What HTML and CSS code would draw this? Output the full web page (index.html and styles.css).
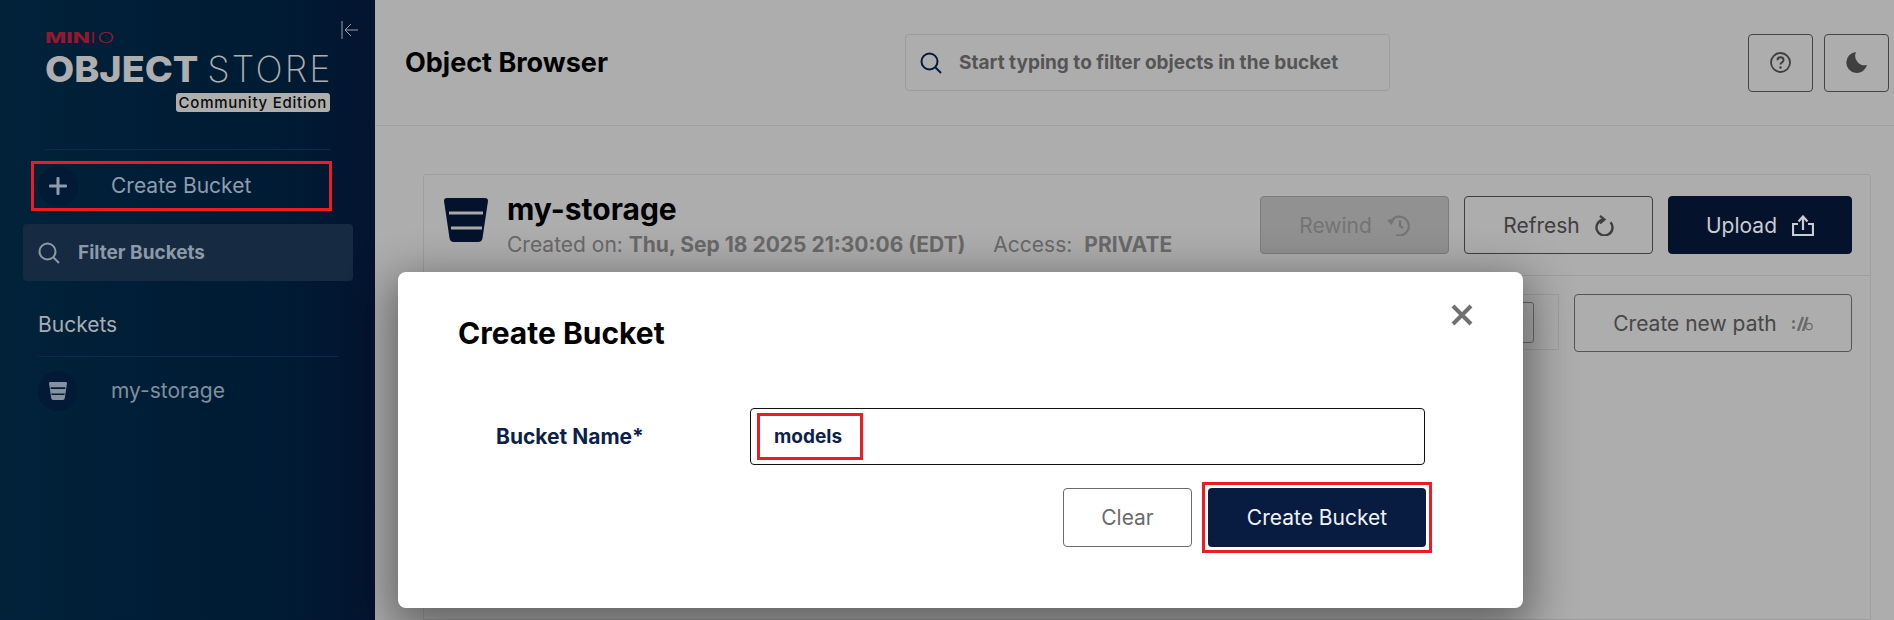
FILE: index.html
```html
<!DOCTYPE html>
<html lang="en">
<head>
<meta charset="UTF-8">
<meta name="viewport" content="width=device-width, initial-scale=1.0">
<title>Object Browser</title>
<link rel="stylesheet" href="styles.css">
</head>
<body>
<aside class="sidebar">
  <button class="collapse-btn" type="button">
    <svg width="18" height="18" viewBox="0 0 18 18" fill="none" stroke="#9a9fa8" stroke-width="1"><path d="M1 0v18M17 9H4M10 3L4 9l6 6"/></svg>
  </button>
  <div class="logo">
    <div class="logo-minio"><b>MIN</b><span>IO</span></div>
    <div class="logo-name"><b>OBJECT</b> <span>STORE</span></div>
    <div class="logo-badge-row"><span class="logo-badge">Community Edition</span></div>
  </div>
  <div class="side-rule"></div>
  <div class="create-link">
    <span class="circle">
      <svg width="18" height="18" viewBox="0 0 18 18" fill="#8e9cad"><rect x="7.5" y="0" width="3" height="18" rx="1"/><rect x="0" y="7.5" width="18" height="3" rx="1"/></svg>
    </span>
    <span class="side-label">Create Bucket</span>
  </div>
  <div class="filter-box">
    <svg width="22" height="22" viewBox="0 0 22 22" fill="none" stroke="#8c99a8" stroke-width="2"><circle cx="9.5" cy="9.5" r="8"/><path d="M15.5 15.5L21 21"/></svg>
    <span>Filter Buckets</span>
  </div>
  <div class="side-title">Buckets</div>
  <div class="bucket-link">
    <span class="circle">
      <svg width="18" height="18" viewBox="0 0 44 44" fill="#8491a2"><path d="M3 0H41Q44 0 44 3L38.5 40Q38 44 34 44H10Q6 44 5.5 40L0 3Q0 0 3 0Z"/><path d="M4 15H40M6 30H38" stroke="#021d36" stroke-width="4"/></svg>
    </span>
    <span class="side-label">my-storage</span>
  </div>
</aside>

<main class="main">
  <header class="topbar">
    <h1 class="page-title">Object Browser</h1>
    <div class="search-box">
      <svg width="22" height="22" viewBox="0 0 22 22" fill="none" stroke="#07193c" stroke-width="2"><circle cx="9.5" cy="9.5" r="8"/><path d="M15.5 15.5L21 21"/></svg>
      <span>Start typing to filter objects in the bucket</span>
    </div>
    <div class="top-actions">
      <button class="icon-btn" type="button">
        <svg width="21" height="21" viewBox="0 0 21 21" fill="none" stroke="#3f3f3f" stroke-width="1.8"><circle cx="10.5" cy="10.5" r="9.5"/><path d="M7.500 8.200c0-3.800 6-3.800 6 0 0 2.300-3 2.100-3 4.300" stroke-width="2"/><circle cx="10.500" cy="15.500" r="1.200" fill="#3f3f3f" stroke="none"/></svg>
      </button>
      <button class="icon-btn" type="button">
        <svg width="21" height="21" viewBox="0 0 21 21" fill="#3f3f3f"><path d="M10 0A10.500 10.500 0 1 0 21 13A9.500 9.500 0 0 1 10 0Z"/></svg>
      </button>
    </div>
  </header>

  <section class="card">
    <div class="bucket-head">
      <svg class="bucket-icon" width="44" height="44" viewBox="0 0 44 44" fill="#05122b"><path d="M3 0H41Q44 0 44 3L38.500 40Q38 44 34 44H10Q6 44 5.500 40L0 3Q0 0 3 0Z"/><path d="M5 15H39M7 30H38" stroke="#a9a9a9" stroke-width="3"/></svg>
      <div class="bucket-info">
        <div class="bucket-name">my-storage</div>
        <div class="bucket-meta">Created on: <b>Thu, Sep 18 2025 21:30:06 (EDT)</b><span class="meta-gap">Access:</span><b>PRIVATE</b></div>
      </div>
      <div class="bucket-actions">
        <button class="btn btn-disabled" type="button">Rewind
          <svg width="23" height="21" viewBox="0 0 23 21" fill="none" stroke="#747474" stroke-width="2.200"><path d="M5 5A9.500 9.500 0 1 1 9 20"/><path d="M0 5l4.500 5L8 3.500z" fill="#747474" stroke="none"/><path d="M13 5.500v5.500l3 2"/></svg>
        </button>
        <button class="btn" type="button">Refresh
          <svg width="19" height="21" viewBox="0 0 19 21" fill="none" stroke="#3f3f3f" stroke-width="2.400"><path d="M8 4.640A8 8 0 1 0 15.500 7.200"/><path d="M5 .8L9.500 4.600 5 8.400" stroke-width="2.200"/></svg>
        </button>
        <button class="btn btn-dark" type="button">Upload
          <svg width="22" height="21" viewBox="0 0 22 21" fill="none" stroke="#c9ccd3" stroke-width="2.200"><path d="M6 9H1v11h20V9h-5"/><path d="M11 15V2"/><path d="M6.500 6.500L11 1.500l4.500 5"/></svg>
        </button>
      </div>
    </div>
    <div class="path-row">
      <div class="breadcrumb"><span class="crumb-btn"></span></div>
      <button class="btn btn-path" type="button">Create new path
        <svg width="21" height="15" viewBox="0 0 21 15" fill="none" stroke="#6a6a6a" stroke-width="2.400"><path d="M6 15L11 1M11 15L15.500 1"/><circle cx="1.500" cy="5.500" r="1.500" fill="#6a6a6a" stroke="none"/><circle cx="1.500" cy="11.500" r="1.500" fill="#6a6a6a" stroke="none"/><circle cx="17" cy="10.500" r="3.200" stroke-width="1.200"/></svg>
      </button>
    </div>
  </section>
</main>

<div class="modal">
  <button class="modal-close" type="button">
    <svg width="22" height="22" viewBox="0 0 22 22" stroke="#707070" stroke-width="4"><path d="M2 2l18 18M20 2L2 20"/></svg>
  </button>
  <h2 class="modal-title">Create Bucket</h2>
  <div class="field">
    <label class="field-label" for="bucketName">Bucket Name*</label>
    <div class="field-input">
      <span class="mark-input" id="bucketName">models</span>
    </div>
  </div>
  <div class="modal-actions">
    <button class="btn-clear" type="button">Clear</button>
    <span class="mark-btn"><button class="btn-create" type="button">Create Bucket</button></span>
  </div>
</div>
</body>
</html>
```

FILE: styles.css
```css
* {
  box-sizing: border-box;
}

html,
body {
  height: 100%;
}

body {
  margin: 0;
  display: flex;
  overflow: hidden;
  font-family: Inter, "Liberation Sans", sans-serif;
  background: #adadad;
}

button {
  font-family: inherit;
}

/* sidebar */
.sidebar {
  position: relative;
  flex: 0 0 375px;
  padding-top: 30px;
  background: linear-gradient(90deg, #01233a 0%, #001d36 45%, #001c35 70%, #04142f 100%);
}

.collapse-btn {
  position: absolute;
  top: 21px;
  left: 341px;
  padding: 0;
  border: 0;
  background: none;
  line-height: 0;
}

.logo {
  width: 285px;
  height: 84px;
  margin-left: 45px;
}

.logo-minio {
  height: 15px;
  color: #8f1a30;
  font-size: 15px;
  line-height: 15px;
  transform: scaleX(1.5);
  transform-origin: left center;
}

.logo-minio b {
  font-weight: 800;
}

.logo-minio span {
  font-weight: 300;
  letter-spacing: 1px;
}

.logo-name {
  margin-top: 6px;
  color: #aeaeae;
  font-size: 36px;
  line-height: 36px;
  white-space: nowrap;
}

.logo-name b {
  display: inline-block;
  width: 152px;
  font-weight: 800;
  transform: scaleX(1.05);
  transform-origin: left center;
}

.logo-name span {
  font-weight: 200;
  letter-spacing: 2.2px;
}

.logo-badge-row {
  display: flex;
  justify-content: flex-end;
  margin-top: 6px;
}

.logo-badge {
  padding: 0 3px;
  border-radius: 3px;
  background: #aeaeae;
  color: #0b0b0b;
  font-size: 15px;
  font-weight: 500;
  line-height: 19px;
  letter-spacing: 0.75px;
  white-space: nowrap;
}

.side-rule {
  height: 1px;
  margin: 35px 45px 0;
  background: #0f2a45;
}

.create-link {
  display: flex;
  align-items: center;
  width: 301px;
  height: 50px;
  margin: 11px 0 0 31px;
  padding-left: 4px;
  border: 3px solid #ed1c24;
}

.circle {
  display: flex;
  flex: 0 0 40px;
  align-items: center;
  justify-content: center;
  height: 40px;
  margin-right: 33px;
  border-radius: 50%;
  background: #021a36;
}

.side-label {
  padding-bottom: 2px;
  color: #8e9cad;
  font-size: 21px;
}

.filter-box {
  display: flex;
  align-items: center;
  gap: 18px;
  width: 330px;
  height: 57px;
  margin: 13px 0 0 23px;
  padding-left: 15px;
  border-radius: 4px;
  background: #162a42;
  color: #8c99a8;
  font-size: 19px;
  font-weight: 700;
}

.side-title {
  margin: 31px 37px 0 38px;
  padding-bottom: 19px;
  border-bottom: 1px solid #0f2a45;
  color: #a8adb2;
  font-size: 21px;
  line-height: 25px;
}

.bucket-link {
  display: flex;
  align-items: center;
  margin: 14px 0 0 38px;
}

.bucket-link .side-label {
  color: #818e9e;
}

/* top bar */
.main {
  display: flex;
  flex: 1;
  flex-direction: column;
  min-width: 0;
}

.topbar {
  display: flex;
  flex: 0 0 126px;
  align-items: center;
  padding: 0 5px 0 30px;
  border-bottom: 1px solid #9e9e9e;
}

.page-title {
  flex: 0 0 500px;
  margin: 0;
  color: #000;
  font-size: 27px;
  font-weight: 700;
}

.search-box {
  display: flex;
  align-items: center;
  gap: 17px;
  width: 485px;
  height: 57px;
  padding-left: 14px;
  border: 1px solid #9c9c9c;
  border-radius: 4px;
  color: #555;
  font-size: 19px;
  font-weight: 700;
}

.top-actions {
  display: flex;
  gap: 11px;
  margin-left: auto;
}

.icon-btn {
  display: flex;
  align-items: center;
  justify-content: center;
  width: 65px;
  height: 58px;
  padding: 0;
  border: 1px solid #444;
  border-radius: 4px;
  background: none;
}

/* bucket card */
.card {
  display: flex;
  flex: 1;
  flex-direction: column;
  min-height: 0;
  margin: 48px 23px 0 48px;
}

.bucket-head {
  display: flex;
  flex: 0 0 102px;
  align-items: flex-start;
  padding: 23px 18px 0 20px;
  border: 1px solid #9e9e9e;
  border-radius: 3px 3px 0 0;
}

.bucket-icon {
  margin-right: 19px;
}

.bucket-name {
  margin-top: -7px;
  color: #000;
  font-size: 30px;
  font-weight: 700;
  line-height: 36px;
}

.bucket-meta {
  margin-top: 5px;
  color: #696969;
  font-size: 21px;
  line-height: 26px;
  white-space: nowrap;
}

.meta-gap {
  margin: 0 12px 0 28px;
}

.bucket-actions {
  display: flex;
  gap: 15px;
  margin-left: auto;
  margin-top: -2px;
}

.btn {
  display: flex;
  align-items: center;
  justify-content: center;
  gap: 15px;
  width: 189px;
  height: 58px;
  padding: 0;
  border: 1px solid #3f3f3f;
  border-radius: 4px;
  background: none;
  color: #3f3f3f;
  font-size: 21px;
}

.btn-disabled {
  border-color: #7d7d7d;
  background: #919191;
  color: #747474;
}

.btn-dark {
  width: 184px;
  border-color: #05122b;
  background: #05122b;
  color: #c9ccd3;
}

.path-row {
  display: flex;
  flex: 1;
  gap: 15px;
  padding: 18px 18px 0 18px;
  border: 1px solid #9e9e9e;
  border-top: 0;
}

.breadcrumb {
  display: flex;
  flex: 1;
  align-items: center;
  justify-content: flex-end;
  height: 56px;
  padding-right: 24px;
  border: 1px solid #9e9e9e;
}

.crumb-btn {
  width: 40px;
  height: 41px;
  border: 1px solid #6a6a6a;
  border-radius: 3px;
}

.btn-path {
  flex: 0 0 278px;
  color: #474747;
  border-color: #555;
}

/* dialog, sits over the page */
.modal {
  position: absolute;
  top: 272px;
  left: 398px;
  width: 1125px;
  height: 336px;
  padding: 40px 98px 0 60px;
  border-radius: 8px;
  background: #fff;
  box-shadow: 0 14px 45px 8px rgba(0, 0, 0, 0.42);
}

.modal-close {
  position: absolute;
  top: 32px;
  right: 50px;
  padding: 0;
  border: 0;
  background: none;
  line-height: 0;
}

.modal-title {
  margin: 0;
  color: #000;
  font-size: 30px;
  font-weight: 700;
  line-height: 42px;
}

.field {
  display: flex;
  align-items: center;
  margin-top: 54px;
}

.field-label {
  flex: 0 0 292px;
  padding-left: 38px;
  color: #0e1f4a;
  font-size: 21px;
  font-weight: 700;
}

.field-input {
  flex: 1;
  height: 57px;
  padding: 4px 6px;
  border: 1px solid #111;
  border-radius: 4px;
}

.mark-input {
  display: block;
  width: 106px;
  height: 47px;
  padding-left: 14px;
  border: 3px solid #ed1c24;
  color: #0e1f4a;
  font-size: 19px;
  font-weight: 700;
  line-height: 41px;
}

.modal-actions {
  display: flex;
  align-items: center;
  justify-content: flex-end;
  gap: 10px;
  margin-top: 17px;
  margin-right: -7px;
}

.btn-clear {
  width: 129px;
  height: 59px;
  border: 1px solid #6b6b6b;
  border-radius: 4px;
  background: #fff;
  color: #6b6b6b;
  font-size: 21px;
}

.mark-btn {
  display: block;
  padding: 3px;
  border: 3px solid #ed1c24;
  line-height: 0;
}

.btn-create {
  width: 218px;
  height: 59px;
  border: 0;
  border-radius: 4px;
  background: #081c42;
  color: #f1f2f5;
  font-size: 21px;
}
```
